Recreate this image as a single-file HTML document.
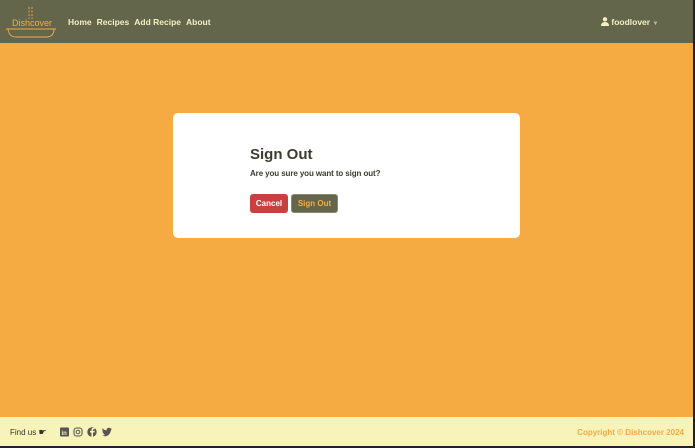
<!DOCTYPE html>
<html><head><meta charset="utf-8"><style>
*{margin:0;padding:0;box-sizing:border-box}
html,body{width:695px;height:448px;overflow:hidden;background:#222;font-family:"Liberation Sans",sans-serif}
#wrap{position:absolute;left:0;top:0;width:693px;height:446px;background:#f5ab41}
nav{position:absolute;left:0;top:0;width:693px;height:43px;background:#64664b}
.links{position:absolute;left:68px;top:17px;font-size:8.5px;font-weight:bold;color:#f4efc2}
.links span{margin-right:5px}
.user{position:absolute;left:601px;top:17px;font-size:8.5px;font-weight:bold;color:#f4efc2}
.card{position:absolute;left:173px;top:113px;width:347px;height:125px;background:#fff;border-radius:5px}
h2{position:absolute;left:77px;top:33px;font-size:15px;color:#3b3c2d}
.q{position:absolute;left:77px;top:56px;font-size:8px;color:#3b3c2d;font-weight:bold;letter-spacing:-0.1px}
.btn{position:absolute;top:81px;height:19px;border-radius:3px;font-size:8px;font-weight:bold;text-align:center;line-height:19px}
footer{position:absolute;left:0;top:417px;width:693px;height:29px;background:#f8f3b8}
.fi{position:absolute;left:10px;top:10px;font-size:8px;color:#333}
.copy{position:absolute;right:9px;top:11px;font-size:8px;font-weight:bold;color:#f5ab41}
</style></head><body><div id="wrap">
<nav>
<svg style="position:absolute;left:5px;top:5px" width="54" height="34" viewBox="0 0 54 34">
<path d="M24 2v12M27 2v12" stroke="#f5ab41" stroke-width="0.9" stroke-dasharray="2 1.5" fill="none"/>
<text x="7" y="21" font-size="9" fill="#f5ab41" font-family="Liberation Sans">Dishcover</text>
<path d="M1 24h50M3 24q1 8 8 8h30q8 0 8-8" stroke="#f5ab41" stroke-width="0.9" fill="none"/>
</svg>
<div class="links"><span>Home</span><span>Recipes</span><span>Add Recipe</span><span>About</span></div>
<div class="user"><svg width="8" height="9" viewBox="0 0 8 9" style="vertical-align:-1px"><circle cx="4" cy="2.3" r="2.2" fill="#f4efc2"/><path d="M0 9q0-4 4-4t4 4z" fill="#f4efc2"/></svg> foodlover <span style="font-size:6px;color:#bbb">▼</span></div>
</nav>
<div class="card">
<h2>Sign Out</h2>
<div class="q">Are you sure you want to sign out?</div>
<div class="btn" style="left:77px;width:38px;background:#c9413f;color:#fff">Cancel</div>
<div class="btn" style="left:118px;width:47px;background:#64664b;color:#f5ab41;border:1px solid #8a8a70;line-height:17px">Sign Out</div>
</div>
<footer>
<div class="fi">Find us <span style="font-size:9px">☛</span></div>
<svg style="position:absolute;left:60px;top:10px" width="54" height="11" viewBox="0 0 54 11">
<rect x="0" y="0.5" width="9" height="9" rx="1" fill="#555"/><text x="1.5" y="8" font-size="6" fill="#f8f3b8" font-weight="bold" font-family="Liberation Sans">in</text>
<rect x="14" y="1" width="8" height="8" rx="2.5" fill="none" stroke="#555" stroke-width="1.1"/><circle cx="18" cy="5" r="1.8" fill="none" stroke="#555" stroke-width="1"/>
<circle cx="32" cy="5" r="4.7" fill="#555"/><path d="M33 10V5.5h1.5l.3-1.6H33V3c0-.5.2-.8.8-.8h1V.8h-1.4C32.3.8 31.4 1.5 31.4 3v.9H30v1.6h1.4V10z" fill="#f8f3b8"/>
<path d="M42 8.5q4 2 7-1 1.5-1.5 2-4.5l1-1.2-1.2.3.8-1.2-1.4.5q-1.6-1.4-3 0-.8.9-.6 2Q44 3.2 42.6 1.3q-.8 1.8.7 3.2l-.9-.2q.1 1.7 1.7 2.1l-.9.1q.5 1.2 1.9 1.3-1.4 1-3.1.7z" fill="#555"/>
</svg>
<div class="copy">Copyright © Dishcover 2024</div>
</footer>
</div></body></html>
